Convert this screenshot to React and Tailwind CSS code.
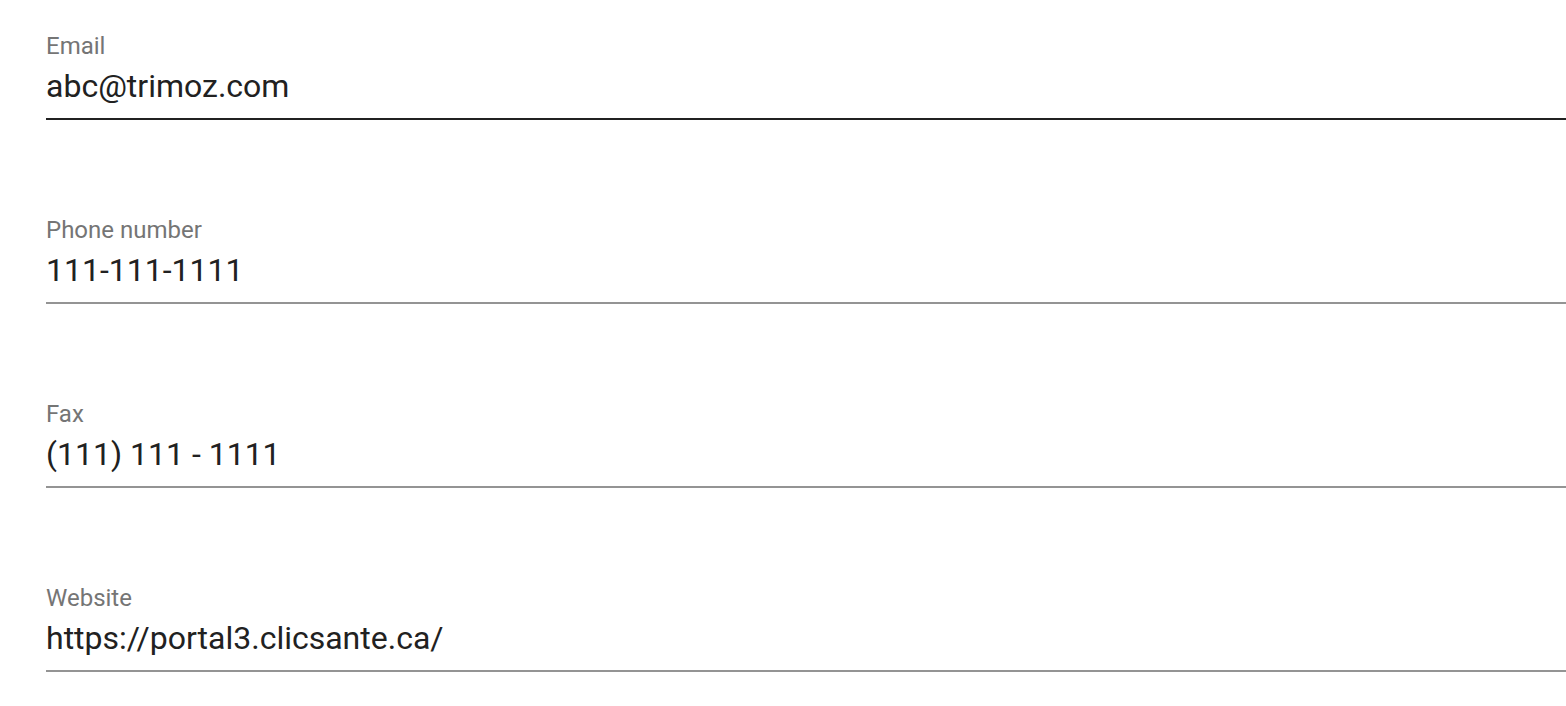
import React from "react";

const fields = [
  { label: "Email", value: "abc@trimoz.com", focused: true },
  { label: "Phone number", value: "111-111-1111" },
  { label: "Fax", value: "(111) 111 - 1111" },
  { label: "Website", value: "https://portal3.clicsante.ca/" },
];

function Field({ label, value, focused }) {
  return (
    <div className="flex flex-col">
      <label className="text-[24px] leading-[28px] text-[#757575]">{label}</label>
      <div
        className={
          "text-[32px] leading-[38px] text-[#212121] pt-[7px] pb-[13px] border-b-2 " +
          (focused ? "border-[#212121]" : "border-[#949494]")
        }
      >
        {value}
      </div>
    </div>
  );
}

export default function App() {
  return (
    <div
      className="min-h-screen bg-white pl-[46px] pt-[32px] flex flex-col gap-[96px]"
      style={{ fontFamily: "Roboto, 'Liberation Sans', sans-serif" }}
    >
      {fields.map((f) => (
        <Field key={f.label} {...f} />
      ))}
    </div>
  );
}
